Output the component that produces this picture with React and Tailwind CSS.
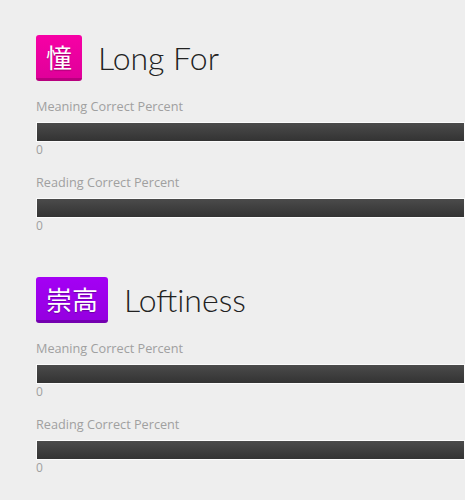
import React from 'react';

const items = [
  { kanji: '憧', meaning: 'Long For', color: 'from-[#f700a5] to-[#e0009a] border-[#b8007e]' },
  { kanji: '崇高', meaning: 'Loftiness', color: 'from-[#a400f5] to-[#9500e0] border-[#7400b0]' },
];

function Stat({ label, first }) {
  return (
    <div className={first ? 'mt-[17px]' : 'mt-4'}>
      <div className="text-[12.7px] leading-[16px] text-[#a0a0a0]">{label}</div>
      <div className="mt-2 h-5 w-full border border-[#fbfbfb] bg-gradient-to-b from-[#4b4b4b] to-[#333333]"></div>
      <div className="text-[12px] leading-[16px] text-[#a0a0a0]">0</div>
    </div>
  );
}

export default function App() {
  return (
    <div className="min-h-[500px] overflow-hidden bg-[#eeeeee] pl-9 pt-[35px] font-['Open_Sans',sans-serif]">
      {items.map((it) => (
        <div key={it.meaning} className="mb-[43px]">
          <div className="flex items-center gap-4">
            <div
              className={`h-[46px] rounded-[3px] border-b-[3px] bg-gradient-to-b px-[10px] text-[26px] leading-[43px] text-white [text-shadow:0_1px_1px_rgba(0,0,0,0.3)] font-['Noto_Sans_CJK_JP',sans-serif] ${it.color}`}
            >
              {it.kanji}
            </div>
            <div className="font-['Lato',sans-serif] text-[32px] font-light leading-[40px] text-[#222222]">{it.meaning}</div>
          </div>
          <Stat label="Meaning Correct Percent" first />
          <Stat label="Reading Correct Percent" />
        </div>
      ))}
    </div>
  );
}
